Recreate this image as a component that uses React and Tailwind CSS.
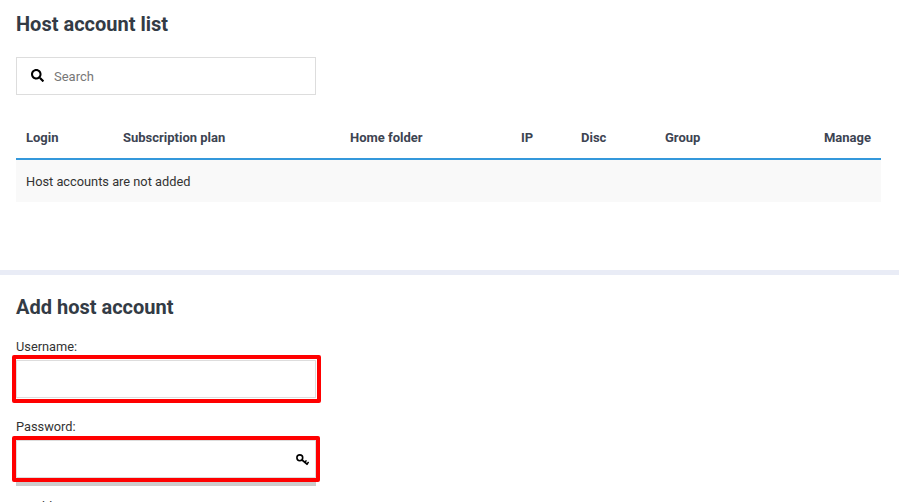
import React from 'react';
import { FaSearch } from 'react-icons/fa';

const columns = 'grid grid-cols-[97px_227px_171px_60px_84px_1fr_auto]';

const KeyIcon = () => (
  <svg width="13" height="12" viewBox="0 0 13 12" className="absolute right-[7px] top-[14px]" fill="none" stroke="#000">
    <circle cx="3.8" cy="3.8" r="2.9" strokeWidth="1.6" />
    <path d="M5.8 5.8 L11.6 10.6" strokeWidth="1.8" />
    <path d="M9 8.4 L10.4 6.4 M11 10 L12.6 8" strokeWidth="1.5" />
  </svg>
);

const Field = ({ label, icon, className, frame }) => (
  <div className={className}>
    <label className="block text-[12.8px] leading-[15px] text-[#333]">{label}</label>
    <div className="relative mt-[6px] w-[300px]">
      <input type="text" className="block h-[38px] w-full border border-[#ddd] bg-white outline-none" />
      {icon}
      <div className={`absolute rounded-[2px] border-4 border-[#ff0000] ${frame}`} />
    </div>
  </div>
);

export default function App() {
  return (
    <div className="h-[502px] overflow-hidden bg-white font-['Roboto',sans-serif] text-[#333]">
      <section className="h-[270px] pl-4 pr-[18px] pt-[12px]">
        <h2 className="text-[20px] font-bold leading-[24px] text-[#333b45]">Host account list</h2>

        <div className="mt-[21px] flex h-[38px] w-[300px] items-center border border-[#ddd] pl-[14px]">
          <FaSearch className="mb-[2px] h-[13px] w-[13px] text-black" />
          <input
            type="text"
            placeholder="Search"
            className="ml-[10px] mt-[1px] min-w-0 flex-1 text-[13px] outline-none placeholder:text-[#777]"
          />
        </div>

        <div className={`${columns} mt-[23px] h-[42px] items-center border-b-2 border-[#3498db] px-[10px] text-[13px] font-bold text-[#3d4452]`}>
          <div>Login</div>
          <div>Subscription plan</div>
          <div>Home folder</div>
          <div>IP</div>
          <div>Disc</div>
          <div>Group</div>
          <div>Manage</div>
        </div>
        <div className="flex h-[42px] items-center bg-[#f9f9f9] px-[10px] pt-[2px] text-[12.8px]">Host accounts are not added</div>
      </section>

      <div className="h-[5px] bg-[#e9ecf6]" />

      <section className="px-4 pt-[20px]">
        <h2 className="text-[20px] font-bold leading-[24px] text-[#333b45]">Add host account</h2>
        <Field
          label="Username:"
          className="mt-[20px]"
          frame="-left-1 -right-[5px] -top-[5px] -bottom-[5px]"
        />
        <Field
          label="Password:"
          icon={<KeyIcon />}
          className="mt-[21px]"
          frame="-left-[4px] -right-1 -top-1 -bottom-1 pointer-events-none"
        />
        <div className="h-1 w-[300px] translate-y-[4px] bg-[#ccc]" />
        <label className="mt-[17px] block text-[12.8px] leading-[15px]">IP address:</label>
      </section>
    </div>
  );
}
